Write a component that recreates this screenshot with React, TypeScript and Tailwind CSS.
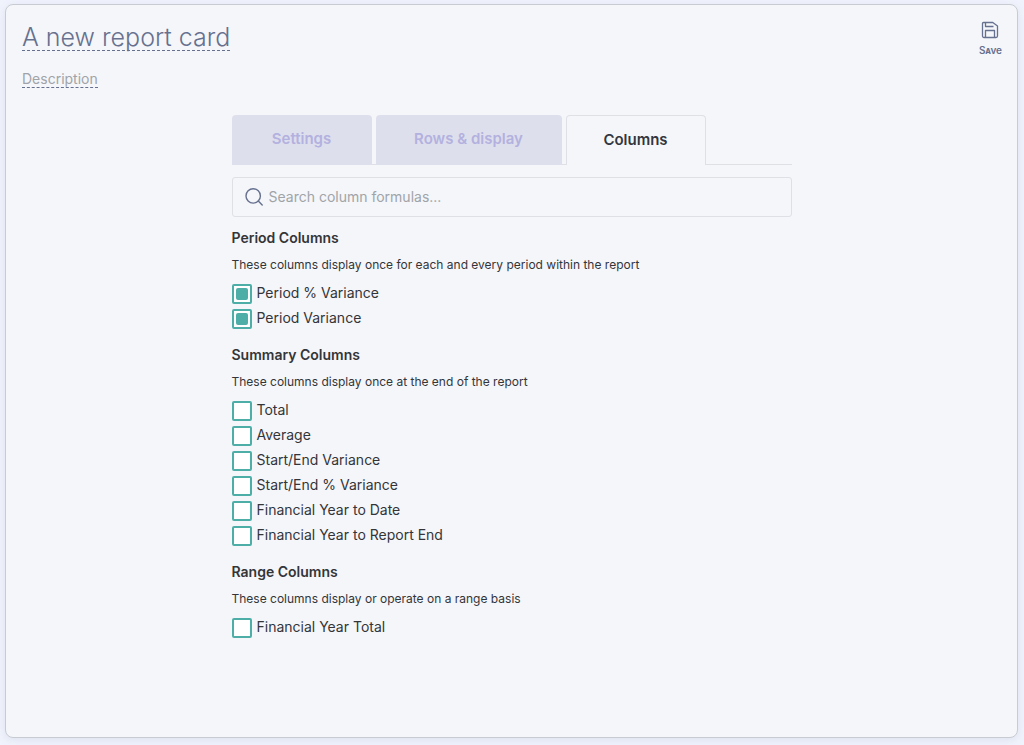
import { useState } from "react";

const TABS = [
  { id: "settings", label: "Settings", width: "w-[140px]" },
  { id: "rows", label: "Rows & display", width: "w-[186px]" },
  { id: "columns", label: "Columns", width: "w-[140px]" },
];

const GROUPS = [
  {
    title: "Period Columns",
    description: "These columns display once for each and every period within the report",
    items: ["Period % Variance", "Period Variance"],
  },
  {
    title: "Summary Columns",
    description: "These columns display once at the end of the report",
    items: [
      "Total",
      "Average",
      "Start/End Variance",
      "Start/End % Variance",
      "Financial Year to Date",
      "Financial Year to Report End",
    ],
  },
  {
    title: "Range Columns",
    description: "These columns display or operate on a range basis",
    items: ["Financial Year Total"],
  },
];

function SaveIcon() {
  return (
    <svg width="18" height="18" viewBox="0 0 18 18" fill="none" stroke="currentColor" strokeWidth="1.3" strokeLinejoin="round" aria-hidden="true">
      <path d="M2.5 1.5h9.3l4.7 3.6v9.9a1.5 1.5 0 0 1-1.5 1.5H3A1.5 1.5 0 0 1 1.5 15V2.5a1 1 0 0 1 1-1Z" />
      <path d="M4.5 1.5v4h8M4.5 16.5v-7h9v7" />
    </svg>
  );
}

function SearchIcon() {
  return (
    <svg width="18" height="18" viewBox="0 0 18 18" fill="none" stroke="currentColor" strokeWidth="1.4" strokeLinecap="round" aria-hidden="true">
      <circle cx="8.2" cy="7.9" r="7.2" />
      <path d="m13.3 13 3.9 3.9" />
    </svg>
  );
}

function Header() {
  return (
    <header className="flex items-start justify-between">
      <div className="flex flex-col items-start">
        <h1 className="mt-5 flex">
          <button type="button" className="border-b border-dashed border-[#66718f] text-[25px] leading-[25px] font-light text-[#66718f]">
            A new report card
          </button>
        </h1>
        <button type="button" className="mt-5 border-b border-dashed border-[#66718f] text-sm leading-4 text-[#a0a4a8]">
          Description
        </button>
      </div>
      <button type="button" className="mt-4 -mr-px flex flex-col items-center text-[#66718f]">
        <SaveIcon />
        <span className="mt-1 text-[10px] leading-[14px] font-semibold [font-variant-caps:small-caps]">Save</span>
      </button>
    </header>
  );
}

function Tabs({ active, onSelect }: { active: string; onSelect: (id: string) => void }) {
  return (
    <div role="tablist" className="flex gap-1 border-b border-[#dfe0e6]">
      {TABS.map((tab) => (
        <button
          key={tab.id}
          type="button"
          role="tab"
          aria-selected={tab.id === active}
          onClick={() => onSelect(tab.id)}
          className={`${tab.width} -mb-px h-[50px] rounded-t text-[15px] font-semibold ${
            tab.id === active
              ? "border border-b-0 border-[#dfe0e6] bg-[#f5f6fa] text-[#33363d]"
              : "bg-[#dedfec] pb-[2px] text-[#b3b1df]"
          }`}
        >
          {tab.label}
        </button>
      ))}
    </div>
  );
}

function ColumnOption({ label, checked, onChange }: { label: string; checked: boolean; onChange: () => void }) {
  return (
    <label className="flex h-5 items-center gap-[5px] text-sm leading-[18px]">
      <input
        type="checkbox"
        checked={checked}
        onChange={onChange}
        className="size-5 shrink-0 appearance-none rounded-[2px] border-2 border-[#4daea8] bg-white p-[2px] before:block before:size-3 before:rounded-[2px] checked:before:bg-[#4daea8]"
      />
      <span className="pb-[2px]">{label}</span>
    </label>
  );
}

export default function App() {
  const [active, setActive] = useState("columns");
  const [search, setSearch] = useState("");
  const [selected, setSelected] = useState(["Period % Variance", "Period Variance"]);

  const toggle = (name: string) => {
    setSelected((prev) => (prev.includes(name) ? prev.filter((n) => n !== name) : [...prev, name]));
  };

  return (
    <div className="flex min-h-screen bg-[#f0f3fc] pt-1 pr-[6px] pb-[7px] pl-[5px] font-['Inter',sans-serif] text-[#333539]">
      <main className="flex-1 rounded-lg border border-[#c9cbd3] bg-[#f5f6fa] px-4 pb-4 shadow-[0_2px_8px_#dde2ee]">
        <Header />
        <div className="mx-auto mt-[27px] max-w-[560px]">
          <Tabs active={active} onSelect={setActive} />
          <label className="mt-3 flex h-10 items-center gap-[6px] rounded-[3px] border border-[#dfe0e6] px-3 text-[#66718f]">
            <SearchIcon />
            <input
              type="text"
              aria-label="Search column formulas"
              placeholder="Search column formulas..."
              value={search}
              onChange={(e) => setSearch(e.target.value)}
              className="min-w-0 flex-1 bg-transparent text-sm outline-none placeholder:text-[#a0a4a8]"
            />
          </label>
          <div className="mt-[11px] flex flex-col gap-4">
            {GROUPS.map((group) => (
              <section key={group.title}>
                <h2 className="text-sm leading-5 font-semibold">{group.title}</h2>
                <p className="mt-[7px] text-xs leading-5">{group.description}</p>
                <div className="mt-[9px] flex flex-col gap-[5px]">
                  {group.items
                    .filter((item) => item.toLowerCase().includes(search.toLowerCase()))
                    .map((item) => (
                      <ColumnOption
                        key={item}
                        label={item}
                        checked={selected.includes(item)}
                        onChange={() => toggle(item)}
                      />
                    ))}
                </div>
              </section>
            ))}
          </div>
        </div>
      </main>
    </div>
  );
}
